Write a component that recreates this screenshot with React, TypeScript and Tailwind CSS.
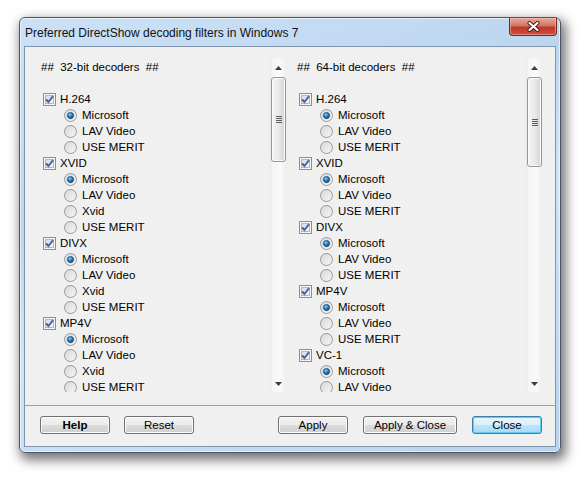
import React from 'react';

type Codec = { name: string; options: string[] };

const fourWay = ['Microsoft', 'LAV Video', 'Xvid', 'USE MERIT'];
const threeWay = ['Microsoft', 'LAV Video', 'USE MERIT'];

// only the rows that are scrolled into view
const codecs32: Codec[] = [
  { name: 'H.264', options: threeWay },
  { name: 'XVID', options: fourWay },
  { name: 'DIVX', options: fourWay },
  { name: 'MP4V', options: fourWay },
];

const codecs64: Codec[] = [
  { name: 'H.264', options: threeWay },
  { name: 'XVID', options: threeWay },
  { name: 'DIVX', options: threeWay },
  { name: 'MP4V', options: threeWay },
  { name: 'VC-1', options: ['Microsoft', 'LAV Video'] },
];

const SharedDefs = () => (
  <svg width="0" height="0" className="block h-0 w-0">
    <defs>
      <linearGradient id="cbFill" x1="0" y1="0" x2="1" y2="1">
        <stop offset="0" stopColor="#d6d9dd" />
        <stop offset="1" stopColor="#fbfbfb" />
      </linearGradient>
      <linearGradient id="rbFill" x1="0" y1="0" x2="1" y2="1">
        <stop offset="0" stopColor="#d2d2d2" />
        <stop offset="1" stopColor="#fcfcfc" />
      </linearGradient>
      <radialGradient id="rbDot" cx="0.4" cy="0.35" r="0.7">
        <stop offset="0" stopColor="#8fe0ff" />
        <stop offset="0.45" stopColor="#1b86c8" />
        <stop offset="1" stopColor="#0b3f73" />
      </radialGradient>
    </defs>
  </svg>
);

const CheckBox = () => (
  <svg width="13" height="13" viewBox="0 0 13 13" className="shrink-0">
    <rect x="0.5" y="0.5" width="12" height="12" fill="#f5f5f5" stroke="#8e8f8f" />
    <rect x="2.5" y="2.5" width="8" height="8" fill="url(#cbFill)" stroke="#b4b8bd" />
    <path d="M3 6.4 L5.4 9 L10 3.2" fill="none" stroke="#4862a6" strokeWidth="1.9" />
  </svg>
);

const Radio = ({ checked }: { checked: boolean }) => (
  <svg width="13" height="13" viewBox="0 0 13 13" className="shrink-0">
    <circle cx="6.5" cy="6.5" r="6" fill="url(#rbFill)" stroke="#979797" />
    <circle cx="6.5" cy="6.5" r="4.3" fill="none" stroke="#e6e6e6" strokeWidth="0.8" />
    {checked && <circle cx="6.5" cy="6.5" r="3.1" fill="url(#rbDot)" stroke="#1d4b78" strokeWidth="0.8" />}
  </svg>
);

const Scrollbar = ({ thumbClass }: { thumbClass: string }) => (
  <div className="flex h-full w-[17px] shrink-0 flex-col bg-[linear-gradient(90deg,#e4e4e4,#f5f5f5_12%,#fafafa_60%,#ececec)]">
    <div className="flex h-[17px] items-center justify-center">
      <svg width="7" height="4" viewBox="0 0 7 4">
        <path d="M3.5 0 L7 4 L0 4 Z" fill="#3c3c3c" />
      </svg>
    </div>
    <div className="flex-1 px-[1px] pt-[1px]">
      <div
        className={`${thumbClass} flex items-center justify-center rounded-[3px] border border-[#979797] bg-[linear-gradient(90deg,#f4f4f4,#e8e8e8_55%,#d3d3d3)] shadow-[inset_0_0_0_1px_#fbfbfb]`}
      >
        <div className="flex flex-col gap-[1px]">
          <div className="h-px w-[6px] bg-[#5c5c5c]" />
          <div className="h-px w-[6px] bg-[#5c5c5c]" />
          <div className="h-px w-[6px] bg-[#5c5c5c]" />
          <div className="h-px w-[6px] bg-[#5c5c5c]" />
        </div>
      </div>
    </div>
    <div className="flex h-[17px] items-center justify-center">
      <svg width="7" height="4" viewBox="0 0 7 4">
        <path d="M0 0 L7 0 L3.5 4 Z" fill="#3c3c3c" />
      </svg>
    </div>
  </div>
);

const DecoderPane = ({ title, codecs, thumbClass }: { title: string; codecs: Codec[]; thumbClass: string }) => (
  <div className="flex h-[333px] w-[247px]">
    <div className="flex-1 overflow-hidden text-[11.5px] leading-4 text-black">
      <div className="h-4 whitespace-pre pl-[1px]">{title}</div>
      <div className="h-4" />
      {codecs.map((codec) => (
        <div key={codec.name}>
          <div className="flex h-4 items-center gap-[4px] pl-[3px]">
            <CheckBox />
            <span>{codec.name}</span>
          </div>
          {codec.options.map((opt, i) => (
            <div key={opt} className="flex h-4 items-center gap-[5px] pl-[24px]">
              <Radio checked={i === 0} />
              <span>{opt}</span>
            </div>
          ))}
        </div>
      ))}
    </div>
    <Scrollbar thumbClass={thumbClass} />
  </div>
);

const Button = ({ label, className }: { label: string; className: string }) => (
  <button
    className={`flex h-[18px] items-center justify-center rounded-[3px] border text-[11.5px] leading-[14px] text-black ${className}`}
  >
    {label}
  </button>
);

const plainBtn =
  'border-[#707070] bg-[linear-gradient(#f2f2f2_0%,#ebebeb_50%,#dddddd_50%,#cfcfcf_100%)] shadow-[inset_0_0_0_1px_#fcfcfc]';

export default function App() {
  return (
    <div className="h-[477px] w-[585px] overflow-hidden bg-white pl-[19px] pt-[17px] font-['Liberation_Sans',Arial,sans-serif]">
      <SharedDefs />
      {/* window frame */}
      <div className="flex h-[436px] w-[542px] flex-col rounded-[6px] border border-[#4a5663] bg-[linear-gradient(160deg,#cce1f6_0%,#bcd6f0_35%,#d0e4f7_55%,#b9d3ee_100%)] px-[4px] pb-[5px] shadow-[3px_5px_12px_2px_rgba(0,0,0,0.55),inset_0_0_0_1px_rgba(255,255,255,0.6)]">
        {/* title bar */}
        <div className="flex h-[28px] items-start justify-between">
          <div className="mt-[7px] pl-[1px] text-[12px] leading-4 text-[#111111]">
            Preferred DirectShow decoding filters in Windows 7
          </div>
          <div className="mr-[-1px] flex h-[18px] w-[48px] items-center justify-center rounded-b-[4px] border border-t-0 border-[#7a2518] bg-[linear-gradient(#e8a89c_0%,#d27565_45%,#bf3a26_55%,#c9513c_100%)] shadow-[inset_0_0_0_1px_rgba(255,200,190,0.5)]">
            <svg width="13" height="11" viewBox="0 0 13 11">
              <path d="M2.5 2 L10.5 9 M10.5 2 L2.5 9" stroke="#4a1510" strokeWidth="4" strokeLinecap="round" />
              <path d="M2.5 2 L10.5 9 M10.5 2 L2.5 9" stroke="#ffffff" strokeWidth="2.2" strokeLinecap="round" />
            </svg>
          </div>
        </div>
        {/* client area */}
        <div className="flex flex-1 flex-col border border-[#8095ad] bg-[#f0f0f0]">
          <div className="flex h-[358px] gap-[9px] pl-[15px] pt-[12px]">
            <DecoderPane title="##  32-bit decoders  ##" codecs={codecs32} thumbClass="h-[85px]" />
            <DecoderPane title="##  64-bit decoders  ##" codecs={codecs64} thumbClass="h-[90px]" />
          </div>
          <div className="h-px bg-[#a0a0a0]" />
          <div className="flex flex-1 justify-between pl-[15px] pr-[13px] pt-[10px]">
            <div className="flex gap-[14px]">
              <Button label="Help" className={`w-[70px] font-bold ${plainBtn}`} />
              <Button label="Reset" className={`w-[70px] ${plainBtn}`} />
            </div>
            <div className="flex gap-[15px]">
              <Button label="Apply" className={`w-[70px] ${plainBtn}`} />
              <Button label="Apply & Close" className={`w-[94px] ${plainBtn}`} />
              <Button
                label="Close"
                className="w-[70px] border-[#3c7fb1] bg-[linear-gradient(#eaf6fd_0%,#d9f0fc_50%,#bee6fd_50%,#a7d9f5_100%)] shadow-[inset_0_0_0_1px_#5fcbf3]"
              />
            </div>
          </div>
        </div>
      </div>
    </div>
  );
}
